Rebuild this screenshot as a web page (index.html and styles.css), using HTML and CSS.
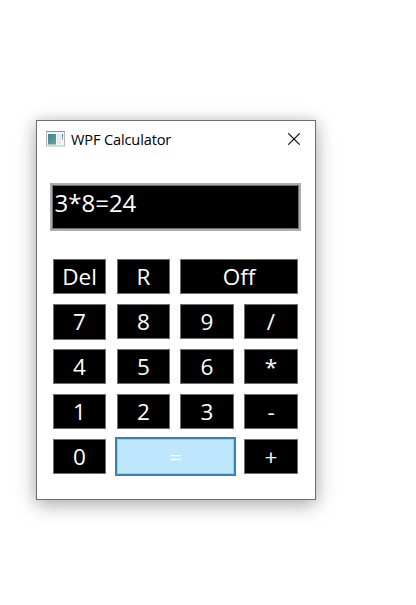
FILE: index.html
```html
<!DOCTYPE html>
<html lang="en">
<head>
<meta charset="utf-8">
<title>WPF Calculator</title>
<link rel="stylesheet" href="styles.css">
</head>
<body>
<main class="window">
  <header class="titlebar">
    <svg class="app-icon" width="19" height="16" viewBox="0 0 19 16">
      <defs>
        <linearGradient id="pane" x1="0" y1="0" x2="1" y2="1">
          <stop offset="0" stop-color="#3f7fae"/>
          <stop offset="1" stop-color="#62aa7c"/>
        </linearGradient>
      </defs>
      <rect x=".5" y=".5" width="18" height="14.5" fill="#f4f5f7" stroke="#b3b5ba"/>
      <path d="M0 .5h19" stroke="#8e959d"/>
      <rect x="2" y="3" width="8" height="10.5" fill="url(#pane)"/>
      <rect x="11" y="3" width="4" height="10.5" fill="#e7e9ec"/>
      <path d="M16.5 3v3" stroke="#4c86b4"/>
      <path d="M16.5 6v3" stroke="#7fb592"/>
    </svg>
    <h1 class="title">WPF Calculator</h1>
    <button class="close" aria-label="Close">
      <svg width="12" height="12" viewBox="0 0 12 12"><path d="M.3.3l11.4 11.4M11.7.3L.3 11.7" stroke="#000" stroke-width="1.1"/></svg>
    </button>
  </header>
  <output class="display">3*8=24</output>
  <section class="keys">
    <button class="key first">Del</button><button class="key">R</button><button class="key wide">Off</button>
    <button class="key first tall">7</button><button class="key">8</button><button class="key">9</button><button class="key">/</button>
    <button class="key first">4</button><button class="key">5</button><button class="key">6</button><button class="key">*</button>
    <button class="key first">1</button><button class="key">2</button><button class="key">3</button><button class="key">-</button>
    <button class="key first">0</button><button class="key wide active">=</button><button class="key">+</button>
  </section>
</main>
</body>
</html>
```

FILE: styles.css
```css
* { box-sizing: border-box; }

body {
  margin: 0;
  height: 605px;
  padding: 120px 0 0 36px;
  background: #fff;
  font-family: "Open Sans", "Noto Sans", sans-serif;
  overflow: hidden;
}

.window {
  width: 280px;
  height: 380px;
  border: 1px solid #707070;
  background: #fff;
  box-shadow: 0 5px 20px rgba(0, 0, 0, .28), 0 1px 12px rgba(0, 0, 0, .12);
}

.titlebar {
  display: flex;
  align-items: center;
  height: 37px;
  padding: 0 15px 0 9px;
}

.app-icon {
  flex: none;
  margin-top: -1px;
}

.title {
  margin: -2px auto 0 6px;
  font-size: 14.6px;
  font-weight: 400;
  letter-spacing: -.15px;
  line-height: 20px;
  white-space: nowrap;
  color: #000;
}

.close {
  display: flex;
  margin-top: -1px;
  padding: 0;
  border: 0;
  background: none;
}

.display {
  display: block;
  width: 251px;
  height: 48px;
  margin: 25px 0 0 13px;
  padding: 0 2.5px;
  border: 2px solid #abadb3;
  box-shadow: inset 0 0 0 1px #6b6b70;
  background: #000;
  color: #fff;
  font-size: 24px;
  line-height: 35px;
}

.keys {
  display: grid;
  grid-template-columns: 54px 53px 54px 54px;
  grid-auto-rows: 35px;
  gap: 10px;
  margin: 28px 0 0 16px;
}

.key {
  padding: 0;
  border: 1px solid #707070;
  background: #000;
  color: #fff;
  font: 400 22.5px/32px "Open Sans", "Noto Sans", sans-serif;
}

.first { margin-right: 1px; }

.tall { margin-bottom: -1px; }

.wide { grid-column: span 2; }

.active {
  margin: -2px;
  border: 2px solid #3c7fb1;
  background: #bee6fd;
  box-shadow: inset 0 0 0 1px #a3cbe2;
}
```
